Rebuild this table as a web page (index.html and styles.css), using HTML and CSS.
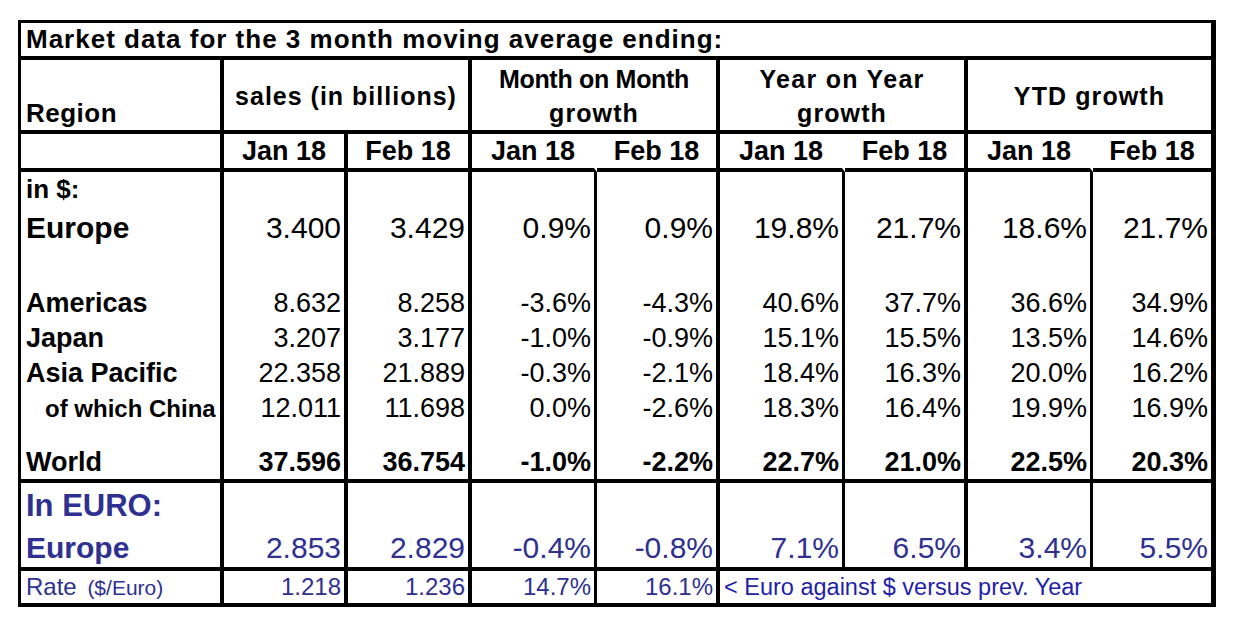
FILE: index.html
```html
<!DOCTYPE html>
<html>
<head>
<meta charset="utf-8">
<title>Market data</title>
<link rel="stylesheet" href="styles.css">
</head>
<body>
<div class="sheet">
  <div class="title">Market data for the 3 month moving average ending:</div>

  <div class="hd region">Region</div>
  <div class="hd grp span2"><span class="hl sales">sales (in billions)</span></div>
  <div class="hd grp span2"><span class="hl"><span class="mom">Month on Month</span><br><span class="gr">growth</span></span></div>
  <div class="hd grp span2"><span class="hl"><span class="yoy">Year on Year</span><br><span class="gr">growth</span></span></div>
  <div class="hd grp span2 last"><span class="hl ytd">YTD growth</span></div>

  <div class="r months">
    <div></div>
    <div>Jan 18</div><div>Feb 18</div>
    <div>Jan 18</div><div>Feb 18</div>
    <div>Jan 18</div><div>Feb 18</div>
    <div>Jan 18</div><div>Feb 18</div>
  </div>

  <div class="r rin">
    <div class="l">in $:</div>
    <div></div><div></div><div></div><div></div><div></div><div></div><div></div><div></div>
  </div>

  <div class="r reu">
    <div class="l">Europe</div>
    <div class="n">3.400</div><div class="n">3.429</div>
    <div class="n">0.9%</div><div class="n">0.9%</div>
    <div class="n">19.8%</div><div class="n">21.7%</div>
    <div class="n">18.6%</div><div class="n">21.7%</div>
  </div>

  <div class="r rb1">
    <div></div><div></div><div></div><div></div><div></div><div></div><div></div><div></div><div></div>
  </div>

  <div class="r rd">
    <div class="l">Americas</div>
    <div class="n">8.632</div><div class="n">8.258</div>
    <div class="n">-3.6%</div><div class="n">-4.3%</div>
    <div class="n">40.6%</div><div class="n">37.7%</div>
    <div class="n">36.6%</div><div class="n">34.9%</div>
  </div>

  <div class="r rd">
    <div class="l">Japan</div>
    <div class="n">3.207</div><div class="n">3.177</div>
    <div class="n">-1.0%</div><div class="n">-0.9%</div>
    <div class="n">15.1%</div><div class="n">15.5%</div>
    <div class="n">13.5%</div><div class="n">14.6%</div>
  </div>

  <div class="r rd">
    <div class="l">Asia Pacific</div>
    <div class="n">22.358</div><div class="n">21.889</div>
    <div class="n">-0.3%</div><div class="n">-2.1%</div>
    <div class="n">18.4%</div><div class="n">16.3%</div>
    <div class="n">20.0%</div><div class="n">16.2%</div>
  </div>

  <div class="r rd">
    <div class="l sub">of which China</div>
    <div class="n">12.011</div><div class="n">11.698</div>
    <div class="n">0.0%</div><div class="n">-2.6%</div>
    <div class="n">18.3%</div><div class="n">16.4%</div>
    <div class="n">19.9%</div><div class="n">16.9%</div>
  </div>

  <div class="r rb2">
    <div></div><div></div><div></div><div></div><div></div><div></div><div></div><div></div><div></div>
  </div>

  <div class="r rw">
    <div class="l">World</div>
    <div class="n">37.596</div><div class="n">36.754</div>
    <div class="n">-1.0%</div><div class="n">-2.2%</div>
    <div class="n">22.7%</div><div class="n">21.0%</div>
    <div class="n">22.5%</div><div class="n">20.3%</div>
  </div>

  <div class="r re1">
    <div class="l">In EURO:</div>
    <div></div><div></div><div></div><div></div><div></div><div></div><div></div><div></div>
  </div>

  <div class="r re2">
    <div class="l">Europe</div>
    <div class="n">2.853</div><div class="n">2.829</div>
    <div class="n">-0.4%</div><div class="n">-0.8%</div>
    <div class="n">7.1%</div><div class="n">6.5%</div>
    <div class="n">3.4%</div><div class="n">5.5%</div>
  </div>

  <div class="r rrate">
    <div class="l">Rate <span class="paren">($/Euro)</span></div>
    <div class="n">1.218</div><div class="n">1.236</div>
    <div class="n">14.7%</div><div class="n">16.1%</div>
    <div class="note">&lt; Euro against $ versus prev. Year</div>
  </div>
</div>
</body>
</html>
```

FILE: styles.css
```css
html, body {
  margin: 0;
  padding: 0;
  background: #fff;
}

body {
  font-family: "Liberation Sans", Arial, sans-serif;
  color: #000;
}

.sheet {
  display: grid;
  width: max-content;
  margin: 20px 0 0 18px;
  grid-template-columns: 203px 124px 124px 125px 123px 125px 123px 125px 118px;
  grid-template-rows: 37px 74px 38px 34px 44px 36px 35px 35px 35px 35px 18px 39px 46px 42px 32px;
  border-left: 3px solid #000;
  border-top: 3px solid #000;
  border-right: 5px solid #000;
  border-bottom: 4px solid #000;
  background: #fff;
}

.sheet div {
  box-sizing: border-box;
  white-space: nowrap;
}

.title {
  grid-column: 1 / -1;
  border-bottom: 4px solid #000;
  font-weight: bold;
  font-size: 26px;
  letter-spacing: 1px;
  line-height: 33px;
  padding-left: 5px;
}

/* header row */
.hd {
  font-weight: bold;
  font-size: 25px;
  border-bottom: 4px solid #000;
  border-right: 4px solid #000;
}
.hd.last { border-right: 0; }

.region {
  display: flex;
  align-items: flex-end;
  line-height: 1;
  padding: 0 0 4px 5px;
  font-size: 26px;
  letter-spacing: 0.5px;
}

.grp {
  display: flex;
  align-items: center;
  justify-content: center;
  text-align: center;
  line-height: 34px;
  padding-top: 2px;
}
.hl { display: block; }
.sales { letter-spacing: 1px; }
.mom { letter-spacing: -0.3px; }
.yoy { letter-spacing: 1.3px; }
.gr { letter-spacing: 1.1px; }
.ytd { letter-spacing: 1.1px; }
.span2 { grid-column: span 2; }

/* generic rows */
.r { display: contents; }
.r > * { border-right: 4px solid #000; }
.r > :nth-child(4),
.r > :nth-child(6),
.r > :nth-child(8) { border-right-width: 3px; }
.r > :nth-child(9) { border-right: 0; }

.l {
  font-weight: bold;
  padding-left: 5px;
}
.n {
  text-align: right;
  padding-right: 3px;
}

/* month row */
.months > * {
  border-bottom: 4px solid #000;
  font-weight: bold;
  font-size: 27px;
  line-height: 34px;
  text-align: center;
}
.months > :nth-child(4),
.months > :nth-child(6),
.months > :nth-child(8) { border-right-color: transparent; }

.rin > * { font-size: 26px; line-height: 34px; }
.reu > * { font-size: 30px; line-height: 44px; }
.rd > * { font-size: 27px; line-height: 35px; }
.rd > .sub { font-size: 24px; padding-left: 24px; }
.rw > * {
  font-size: 27px;
  line-height: 36px;
  font-weight: bold;
  border-bottom: 4px solid #000;
}

.re1 > *, .re2 > *, .rrate > * { color: #2e3092; }
.re1 > * { font-size: 31px; line-height: 46px; }
.re2 > * {
  font-size: 30px;
  line-height: 38px;
  border-bottom: 4px solid #000;
}

.rrate > * { font-size: 24px; line-height: 32px; }
.rrate > .l { font-weight: normal; }
.paren {
  font-size: 21px;
  margin-left: 4px;
}

.sheet .note {
  grid-column: span 4;
  border-right: 0;
  color: #1f1fa8;
  font-size: 23.5px;
  padding-left: 4px;
}
```
